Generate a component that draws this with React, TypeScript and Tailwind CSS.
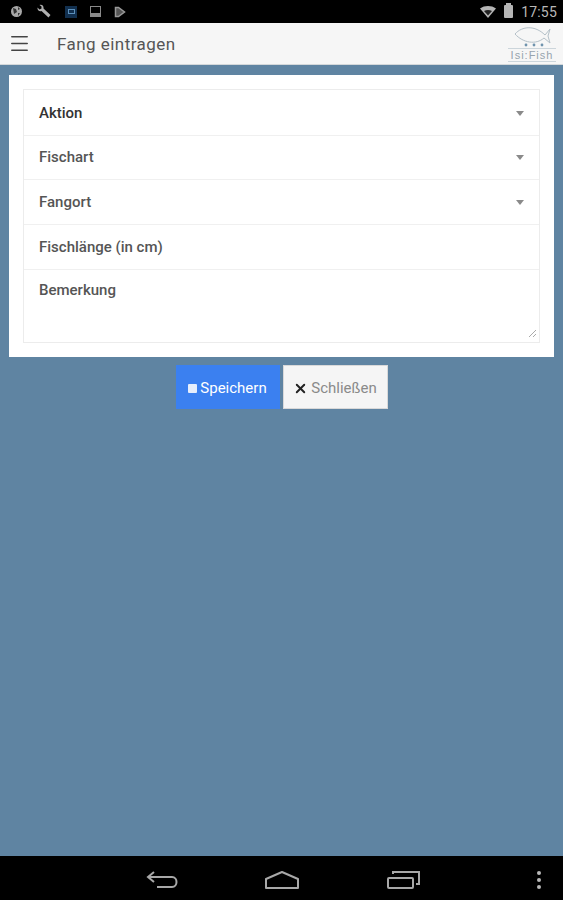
import React from "react";
import { Menu, X } from "lucide-react";

const fields = [
  { label: "Aktion", height: "h-[46px] pt-[2px]", dark: true, select: true },
  { label: "Fischart", height: "h-[44px]", select: true },
  { label: "Fangort", height: "h-[45px] pt-[1px]", select: true },
  { label: "Fischlänge (in cm)", height: "h-[45px] pt-[1px]" },
];

const StatusIcons = () => (
  <div className="flex items-center gap-[13px] pl-[10px]">
    <svg width="13" height="13" viewBox="0 0 13 13">
      <circle cx="6.5" cy="6.5" r="5.5" fill="#a8a8a8" />
      <path d="M3 3l3 1 1 3-3 2zM8 2l2 2-2 1zM8 8l2 0-2 3z" fill="#333" />
    </svg>
    <svg width="16" height="15" viewBox="0 0 16 15">
      <path
        d="M1.500 3.500L3.500 5.500 5.500 4.500 5.500 2.500 3.500 1C6 .3 8 2 7.500 4.500L14.500 11 12.500 13.500 5.500 7C3.500 7.800 1 6 1.500 3.500z"
        fill="#b0b0b0"
      />
    </svg>
    <div className="flex h-[12px] w-[12px] items-center justify-center bg-[#12304f]">
      <div className="h-[5px] w-[7px] border border-[#5b8fbb]" />
    </div>
    <div className="flex h-[11px] w-[11px] flex-col justify-end border border-[#8a8a8a]">
      <div className="h-[3px] bg-[#8a8a8a]" />
    </div>
    <svg width="12" height="12" viewBox="0 0 12 12">
      <path d="M1.500 1.500v9h3l6-4.500-6-4.500z" fill="#555" stroke="#999" strokeWidth="1.500" />
    </svg>
  </div>
);

const Logo = () => (
  <div className="flex w-[48px] flex-col items-center">
    <svg width="42" height="23" viewBox="0 0 42 23" fill="none" stroke="#b4c0c8" strokeWidth="1">
      <path d="M4 9c7-8 20-9 30 1l5-6-2 7 2 7-6-5c-8 7-21 5-29-4z" />
      <circle cx="15" cy="20" r="1.400" fill="#6f93ad" stroke="none" />
      <circle cx="23" cy="20" r="1.400" fill="#6f93ad" stroke="none" />
      <circle cx="31" cy="20" r="1.400" fill="#6f93ad" stroke="none" />
    </svg>
    <div className="w-full border-y border-[#ccd5db] text-center font-['Liberation_Sans',sans-serif] text-[11px] leading-[12px] tracking-[1px] text-[#97a4ae]">
      Isi:Fish
    </div>
  </div>
);

const Caret = () => <div className="h-0 w-0 border-x-[4px] border-t-[5px] border-x-transparent border-t-[#8a8a8a]" />;

const App = () => {
  return (
    <div className="flex h-[900px] w-[563px] flex-col overflow-hidden bg-[#5f84a2] font-['Roboto',sans-serif]">
      <div className="flex h-[23px] shrink-0 items-center justify-between bg-black pr-[6px]">
        <StatusIcons />
        <div className="flex items-center gap-[8px]">
          <svg width="16" height="12" viewBox="0 0 16 12">
            <path d="M0 2.500C4.500-.8 11.500-.8 16 2.500L8 12z" fill="#b5b5b5" />
            <path d="M4 5c2.500-1.500 5.500-1.500 8 0L8 9.500z" fill="#222" />
          </svg>
          <div className="relative h-[13px] w-[9px] rounded-[1px] bg-[#b5b5b5]">
            <div className="absolute left-[2px] top-[-2px] h-[2px] w-[5px] bg-[#b5b5b5]" />
          </div>
          <span className="text-[14px] leading-none tracking-[0.2px] text-[#b8b8b8]">17:55</span>
        </div>
      </div>

      <header className="flex h-[42px] shrink-0 items-center justify-between border-b border-[#d4d8da] bg-[#f6f6f6] pl-[8px] pr-[7px]">
        <div className="flex items-center">
          <Menu className="h-[23px] w-[23px] text-[#444]" strokeWidth={1.7} />
          <h1 className="ml-[26px] mt-[3px] text-[17px] font-normal tracking-[0.45px] text-[#555]">Fang eintragen</h1>
        </div>
        <Logo />
      </header>

      <main className="flex flex-1 flex-col items-center px-[9px] pt-[10px]">
        <div className="h-[282px] w-full bg-white px-[14px] py-[14px]">
          <div className="border border-[#ececec]">
            {fields.map((field) => (
              <div
                key={field.label}
                className={`flex items-center justify-between border-b border-[#f0f0f0] pl-[15px] pr-[15px] ${field.height}`}
              >
                <span className={`text-[15px] font-medium ${field.dark ? "text-[#333]" : "text-[#555]"}`}>
                  {field.label}
                </span>
                {field.select && <Caret />}
              </div>
            ))}
            <div className="relative h-[72px] pl-[15px] pt-[8px]">
              <span className="text-[15px] font-medium text-[#555]">Bemerkung</span>
              <svg className="absolute bottom-[4px] right-[2px]" width="9" height="9" viewBox="0 0 9 9" stroke="#aaa">
                <path d="M1 8l7-7M5 8l3-3" />
              </svg>
            </div>
          </div>
        </div>

        <div className="mt-[8px] flex gap-[3px]">
          <button className="flex h-[44px] w-[104px] items-center justify-center gap-[3px] bg-[#3b80f0] pt-[2px] text-[15px] text-white">
            <span className="h-[9px] w-[9px] rounded-[1px] bg-[#e6eefc]" />
            Speichern
          </button>
          <button className="flex h-[44px] w-[105px] items-center justify-center gap-[3px] border border-[#d9d9d9] bg-[#f5f5f5] pt-[2px] text-[15px] text-[#8a8a8a]">
            <X className="h-[15px] w-[15px] text-[#222]" strokeWidth={3} />
            Schließen
          </button>
        </div>
      </main>

      <nav className="relative flex h-[44px] shrink-0 items-center bg-black pt-[3px]">
        <svg className="ml-[146px]" width="33" height="20" viewBox="0 0 33 20" fill="none" stroke="#a8a8a8" strokeWidth="2">
          <path d="M8 2L2 7l6 5M2 7h24c6 0 6 10 0 10H11" />
        </svg>
        <svg className="ml-[85px]" width="36" height="20" viewBox="0 0 36 20" fill="none" stroke="#a8a8a8" strokeWidth="2">
          <path d="M2 9L18 2l16 7v9H2z" strokeLinejoin="round" />
        </svg>
        <svg className="ml-[87px]" width="33" height="20" viewBox="0 0 33 20" fill="none" stroke="#a8a8a8" strokeWidth="2">
          <rect x="1" y="8" width="25" height="10" rx="1" />
          <path d="M6 4V2h26v12h-3" />
        </svg>
        <div className="absolute right-[22px] top-[15px] flex flex-col gap-[3px]">
          <span className="h-[4px] w-[4px] rounded-full bg-[#b8b8b8]" />
          <span className="h-[4px] w-[4px] rounded-full bg-[#b8b8b8]" />
          <span className="h-[4px] w-[4px] rounded-full bg-[#b8b8b8]" />
        </div>
      </nav>
    </div>
  );
};

export default App;
